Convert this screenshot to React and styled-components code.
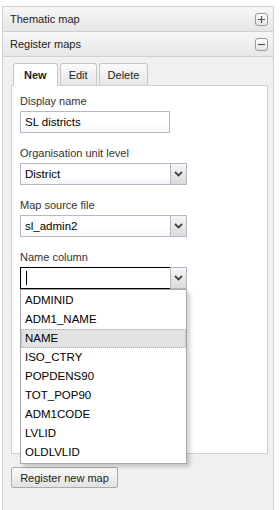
import React from 'react'
import styled, { createGlobalStyle } from 'styled-components'

const GlobalStyle = createGlobalStyle`
  html, body {
    margin: 0;
    padding: 0;
    background: #ffffff;
    font-family: "Liberation Sans", Arial, sans-serif;
    font-size: 11px;
    color: #000;
  }
`

const columns = ['ADMINID', 'ADM1_NAME', 'NAME', 'ISO_CTRY', 'POPDENS90', 'TOT_POP90', 'ADM1CODE', 'LVLID', 'OLDLVLID']

const Page = styled.div`
  padding: 6px 6px 0 2px;
  height: 504px;
  overflow: hidden;
`

const Panel = styled.div`
  border: 1px solid #d0d0d0;
  border-bottom: none;
  height: 100%;
  display: flex;
  flex-direction: column;
  background: #f0f0f0;
`

const Header = styled.div`
  height: 24px;
  display: flex;
  align-items: center;
  justify-content: space-between;
  padding: 0 5px 0 7px;
  background: linear-gradient(#f7f7f7, #e6e6e6);
  border-bottom: 1px solid #d0d0d0;
  color: #222;
  font-size: 11px;
  flex-shrink: 0;
`

const Tool = styled.span`
  width: 11px;
  height: 11px;
  border: 1px solid #999;
  border-radius: 3px;
  background: linear-gradient(#ffffff, #e4e4e4);
  display: flex;
  align-items: center;
  justify-content: center;
`

const Body = styled.div`
  flex: 1;
  padding: 5px 5px 0 8px;
  display: flex;
  flex-direction: column;
`

const TabStrip = styled.div`
  display: flex;
  gap: 2px;
  padding-left: 2px;
  height: 23px;
  align-items: flex-end;
`

const Tab = styled.div`
  height: ${p => (p.$active ? '23px' : '22px')};
  box-sizing: border-box;
  padding: 0 ${p => (p.$active ? '10px' : '8px')};
  display: flex;
  align-items: center;
  border: 1px solid #c6c6c6;
  border-bottom: ${p => (p.$active ? '1px solid #fff' : 'none')};
  border-radius: 3px 3px 0 0;
  background: ${p => (p.$active ? '#ffffff' : 'linear-gradient(#fbfbfb, #e6e6e6)')};
  font-weight: ${p => (p.$active ? 'bold' : 'normal')};
  color: #222;
  margin-bottom: ${p => (p.$active ? '-1px' : '0')};
  position: relative;
`

const TabBody = styled.div`
  background: #ffffff;
  border: 1px solid #d0d0d0;
  height: 369px;
  padding: 7px 8px 0 8px;
  box-sizing: border-box;
`

const Field = styled.div`
  margin-bottom: 12px;
  position: relative;
`

const Label = styled.div`
  line-height: 16px;
  height: 16px;
  margin-bottom: 2px;
  color: #333;
`

const TextBox = styled.div`
  width: ${p => p.$width}px;
  height: 22px;
  box-sizing: border-box;
  border: 1px solid ${p => (p.$focus ? '#000' : '#b5b8c8')};
  border-right: ${p => (p.$combo ? 'none' : undefined)};
  background: ${p => (p.$focus ? '#fff' : 'linear-gradient(#ffffff 60%, #f4f6f4)')};
  padding: 0 4px;
  display: flex;
  align-items: center;
  color: #000;
  font-size: 11.5px;
`

const Combo = styled.div`
  display: flex;
  width: 167px;
`

const Trigger = styled.div`
  width: 17px;
  height: 22px;
  box-sizing: border-box;
  border: 1px solid #b5b8c8;
  background: linear-gradient(#f6f6f6, #dadada);
  display: flex;
  align-items: center;
  justify-content: center;
`

const Caret = styled.span`
  width: 1px;
  height: 14px;
  background: #000;
  margin-left: 1px;
`

const List = styled.div`
  position: absolute;
  left: 0;
  top: 40px;
  width: 167px;
  box-sizing: border-box;
  background: #fff;
  border: 1px solid #a8a8a8;
  padding: 1px 0;
  box-shadow: 3px 3px 4px rgba(0, 0, 0, 0.18);
  z-index: 2;
`

const Item = styled.div`
  height: 19px;
  line-height: 17px;
  box-sizing: border-box;
  padding-left: 3px;
  border: 1px ${p => (p.$selected ? 'dotted #a9a9a9' : 'solid transparent')};
  background: ${p => (p.$selected ? '#e2e2e2' : 'transparent')};
  color: #000;
  font-size: 11.5px;
`

const Button = styled.div`
  margin-top: 13px;
  align-self: flex-start;
  height: 21px;
  box-sizing: border-box;
  padding: 0 8px;
  border: 1px solid #aaa;
  border-radius: 2px;
  background: linear-gradient(#fafafa, #e2e2e2);
  display: flex;
  align-items: center;
  justify-content: center;
  white-space: nowrap;
  color: #222;
  font-size: 11px;
  width: 107px;
`

const Chevron = () => (
  <svg width="9" height="6" viewBox="0 0 9 6">
    <path d="M1 1 L4.5 4.5 L8 1" stroke="#444" strokeWidth="1.8" fill="none" />
  </svg>
)

const Plus = ({ minus }) => (
  <svg width="9" height="9" viewBox="0 0 9 9">
    <path d={minus ? 'M1 4.5 H8' : 'M1 4.5 H8 M4.5 1 V8'} stroke="#555" strokeWidth="1.2" />
  </svg>
)

function ComboField({ label, value, focus, children }) {
  return (
    <Field>
      <Label>{label}</Label>
      <Combo>
        <TextBox $width={150} $combo $focus={focus}>
          {focus ? <Caret /> : value}
        </TextBox>
        <Trigger><Chevron /></Trigger>
      </Combo>
      {children}
    </Field>
  )
}

export default function App() {
  return (
    <Page>
      <GlobalStyle />
      <Panel>
        <Header>
          Thematic map
          <Tool><Plus /></Tool>
        </Header>
        <Header>
          Register maps
          <Tool><Plus minus /></Tool>
        </Header>
        <Body>
          <TabStrip>
            <Tab $active>New</Tab>
            <Tab>Edit</Tab>
            <Tab>Delete</Tab>
          </TabStrip>
          <TabBody>
            <Field>
              <Label>Display name</Label>
              <TextBox $width={150}>SL districts</TextBox>
            </Field>
            <ComboField label="Organisation unit level" value="District" />
            <ComboField label="Map source file" value="sl_admin2" />
            <ComboField label="Name column" focus>
              <List>
                {columns.map(c => (
                  <Item key={c} $selected={c === 'NAME'}>{c}</Item>
                ))}
              </List>
            </ComboField>
          </TabBody>
          <Button>Register new map</Button>
        </Body>
      </Panel>
    </Page>
  )
}
